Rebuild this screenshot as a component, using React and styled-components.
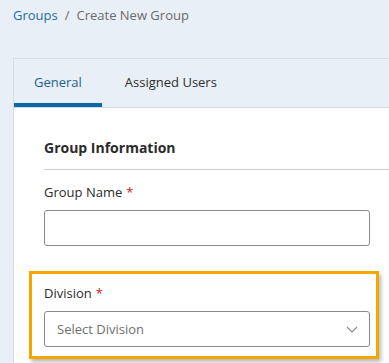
import React from 'react'
import styled, { createGlobalStyle } from 'styled-components';

const GlobalStyle = createGlobalStyle`
    html, body {
        margin: 0;
        padding: 0;
        background: #e9eff6;
        overflow: hidden;
    }
    body {
        font-family: 'Open Sans', 'Liberation Sans', sans-serif;
    }
`

const StyledPage = styled.div`
    padding: 6px 0 0 13px;
    width: 389px;
    height: 363px;
    box-sizing: border-box;
    overflow: hidden;
`

const StyledBreadcrumb = styled.nav`
    display: flex;
    align-items: center;
    gap: 7px;
    font-size: 13px;
    line-height: 18px;
    color: #6b6b6b;
`

const StyledCrumbLink = styled.a`
    color: #1f6da3;
    text-decoration: none;
`

const StyledCard = styled.div`
    margin-top: 34px;
    margin-right: -10px;
    border: 1px solid #d6dde5;
    border-right: none;
    background: #fff;
`

const StyledTabBar = styled.div`
    display: flex;
    background: #e9eff6;
    border-bottom: 1px solid #d3dae2;
`

const StyledTab = styled.div`
    height: 48px;
    box-sizing: border-box;
    padding: 2px ${p => p.$padding}px 0;
    display: flex;
    align-items: center;
    font-size: 13px;
    color: ${p => p.$active ? '#1f5f8b' : '#2e2e2e'};
    border-bottom: 4px solid ${p => p.$active ? '#0a6aa8' : 'transparent'};
`

const StyledContent = styled.div`
    padding: 30px 0 20px 30px;
`

const StyledSectionTitle = styled.h2`
    margin: 0;
    font-size: 14px;
    line-height: 20px;
    font-weight: 700;
    color: #2b2b2b;
    padding-bottom: 11px;
    border-bottom: 1px solid #cdcdcd;
`

const StyledField = styled.div`
    width: 326px;
    margin-top: ${p => p.$top}px;
`

const StyledHighlight = styled.div`
    margin: 25px 0 0 -15px;
    width: 350px;
    box-sizing: border-box;
    border: 3px solid #f5a700;
    padding: 10px 6px 9px 12px;
    box-shadow: 2px 3px 4px rgba(0, 0, 0, 0.28);
`

const StyledLabel = styled.label`
    display: block;
    font-size: 13px;
    line-height: 18px;
    color: #2b2b2b;
    margin-bottom: 9px;
`

const StyledRequired = styled.span`
    color: #c0272d;
    margin-left: 4px;
`

const StyledInput = styled.div`
    height: 36px;
    box-sizing: border-box;
    border: 1px solid #8a8a8a;
    border-radius: 3px;
    background: #fff;
    display: flex;
    align-items: center;
    justify-content: space-between;
    padding: 0 11px 0 12px;
    font-size: 13px;
    color: #6f6f6f;
`

const Chevron = () => (
    <svg width="12" height="7" viewBox="0 0 12 7" fill="none">
        <path d="M1 1l5 5 5-5" stroke="#8a8a8a" strokeWidth="1.1" />
    </svg>
)

export default function App() {
    return (
        <StyledPage>
            <GlobalStyle />
            <StyledBreadcrumb>
                <StyledCrumbLink href="#">Groups</StyledCrumbLink>
                <span>/</span>
                <span>Create New Group</span>
            </StyledBreadcrumb>
            <StyledCard>
                <StyledTabBar>
                    <StyledTab $active $padding={20}>General</StyledTab>
                    <StyledTab $padding={23}>Assigned Users</StyledTab>
                </StyledTabBar>
                <StyledContent>
                    <StyledSectionTitle>Group Information</StyledSectionTitle>
                    <StyledField $top={13}>
                        <StyledLabel>Group Name<StyledRequired>*</StyledRequired></StyledLabel>
                        <StyledInput />
                    </StyledField>
                    <StyledHighlight>
                        <StyledLabel>Division<StyledRequired>*</StyledRequired></StyledLabel>
                        <StyledInput>
                            <span>Select Division</span>
                            <Chevron />
                        </StyledInput>
                    </StyledHighlight>
                </StyledContent>
            </StyledCard>
        </StyledPage>
    )
}
